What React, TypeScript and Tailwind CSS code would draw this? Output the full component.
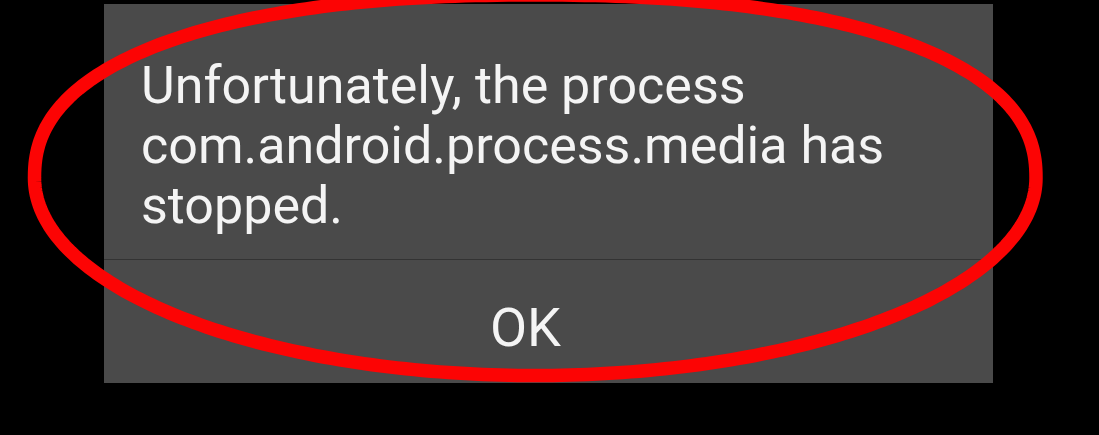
import React from "react";

function ellipsePath(): string {
  const cx = 535.25;
  const cy = 178;
  const rx = 500.75;
  const ryTop = 183;
  const ryBot = 197.5;
  const n = 2.3;
  const pts: string[] = [];
  const steps = 360;
  for (let i = 0; i <= steps; i++) {
    const t = (i / steps) * Math.PI * 2;
    const c = Math.cos(t);
    const s = Math.sin(t);
    let x: number;
    let y: number;
    if (s >= 0) {
      // top half (superellipse)
      x = cx + rx * Math.sign(c) * Math.pow(Math.abs(c), 2 / n);
      y = cy - ryTop * Math.pow(Math.abs(s), 2 / n);
    } else {
      x = cx + rx * c;
      y = cy + ryBot * Math.abs(s);
    }
    pts.push(`${i === 0 ? "M" : "L"}${x.toFixed(2)} ${y.toFixed(2)}`);
  }
  return pts.join(" ") + " Z";
}

export default function App() {
  return (
    <div
      className="relative w-[1099px] h-[435px] bg-black overflow-hidden"
      style={{ fontFamily: "Roboto, 'Noto Sans', sans-serif" }}
    >
      <div className="pt-[4px] pl-[104px]">
        <div className="w-[889px] h-[379px] bg-[#4a4a4a] flex flex-col">
          <div className="pt-[52px] pl-[37px] pr-[20px] pb-[23px] text-[52px] leading-[60px] text-[#f4f4f4]">
            Unfortunately, the process
            <br />
            com.android.process.media has
            <br />
            stopped.
          </div>
          <div className="h-px bg-[#333333]" />
          <div className="flex-1 flex justify-center pr-[46px] pt-[38px]">
            <span className="text-[54px] leading-[60px] text-[#f4f4f4]">OK</span>
          </div>
        </div>
      </div>
      <svg
        className="absolute left-0 top-0 pointer-events-none"
        width="1099"
        height="435"
        viewBox="0 0 1099 435"
      >
        <path d={ellipsePath()} fill="none" stroke="#fc0404" strokeWidth="13.5" />
      </svg>
    </div>
  );
}
